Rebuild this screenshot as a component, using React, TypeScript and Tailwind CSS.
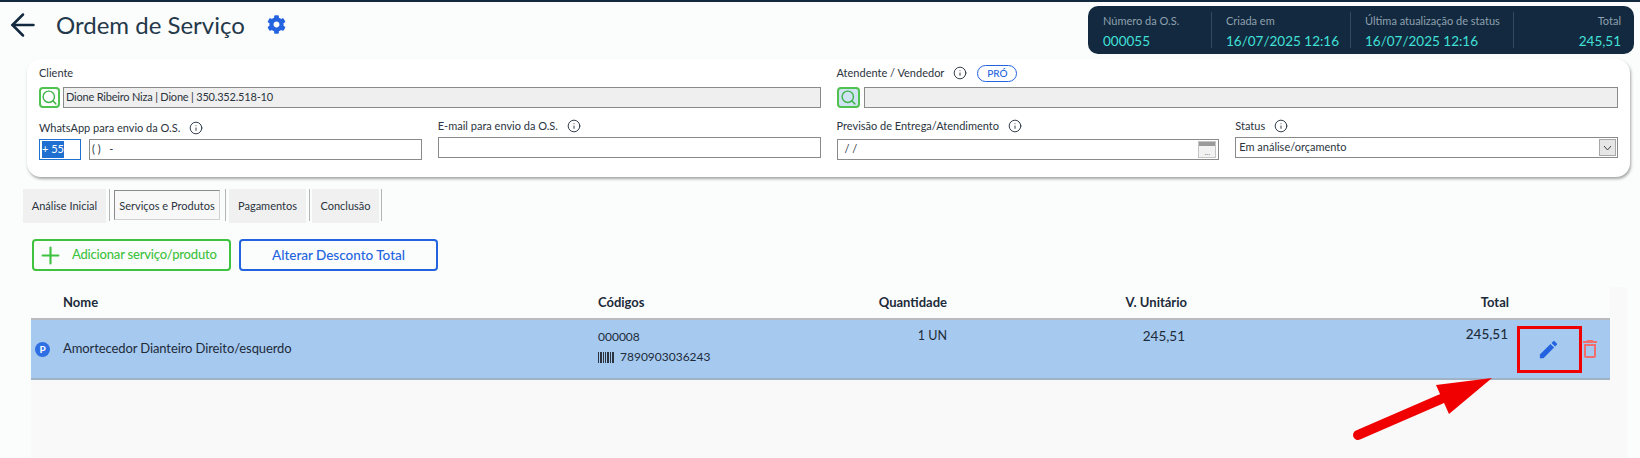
import { ArrowLeft, Info, Plus, Search } from "lucide-react";
import { FaCog } from "react-icons/fa";
import { MdEdit, MdOutlineDelete } from "react-icons/md";

const tableCols = "grid grid-cols-[32px_535px_200px_149px_240px_322px_101px]";

function Stat({
  label,
  value,
  className,
  right,
}: {
  label: string;
  value: string;
  className: string;
  right?: boolean;
}) {
  return (
    <div className={`flex flex-col justify-between py-[5px] ${right ? "items-end" : ""} ${className}`}>
      <span className="text-[11px] leading-[20px] text-[#8fa0ae]">{label}</span>
      <span className="text-[13.5px] leading-[20px] text-[#41e0d8]">{value}</span>
    </div>
  );
}

function FieldLabel({ text, info, className = "" }: { text: string; info?: boolean; className?: string }) {
  return (
    <div className={`flex h-[20px] items-center text-[11px] text-[#2b3440] ${className}`}>
      {text}
      {info ? <Info className="ml-[9px] h-[14px] w-[14px] text-[#26323f]" strokeWidth={1.6} /> : null}
    </div>
  );
}

function SearchButton({ active }: { active?: boolean }) {
  return (
    <span
      className={`grid h-[21px] shrink-0 place-items-center rounded-[4px] border-2 border-[#4fc24f] ${
        active ? "w-[23px] bg-[#cfe3f2]" : "w-[21px] bg-white"
      }`}
    >
      <Search className="h-[17px] w-[17px] text-[#3fb24a]" strokeWidth={2} />
    </span>
  );
}

function Tab({ text, active, className }: { text: string; active?: boolean; className: string }) {
  return (
    <div className="flex items-start">
      <div
        className={
          active
            ? `mt-[1px] flex h-[30px] items-center justify-center whitespace-nowrap border border-[#8a8a8a] border-b-[#d0d0d0] border-r-[#d0d0d0] bg-[#f8f8f8] pt-[2px] text-[11px] text-[#2b3440] ${className}`
            : `flex h-[34px] items-center justify-center whitespace-nowrap bg-[#f0f0f0] text-[11px] text-[#2b3440] ${className}`
        }
      >
        {text}
      </div>
    </div>
  );
}

function TabDivider({ className }: { className: string }) {
  return <div className={`h-[32px] w-px bg-[#b4b4b4] ${className}`} />;
}

export default function App() {
  return (
    <div className="relative h-[458px] w-[1640px] overflow-hidden bg-[#fbfdfc] font-['Lato',sans-serif]">
      <div className="h-[2px] bg-[#12293f]" />

      <header className="flex h-[57px] items-start">
        <ArrowLeft className="ml-[5px] mt-[5px] h-[36px] w-[36px] shrink-0 text-[#12293f]" strokeWidth={1.7} />
        <h1 className="ml-[15px] mt-[5px] text-[24px] leading-[36px] text-[#24384a]">
          Ordem de Serviço
        </h1>
        <FaCog className="ml-[22px] mt-[13px] h-[19px] w-[19px] text-[#2463e0]" />
        <div className="ml-auto mr-[6px] mt-[4px] flex h-[48px] w-[546px] rounded-[10px] bg-[#12293f] pl-[15px] pr-[13px]">
          <Stat label="Número da O.S." value="000055" className="w-[108px]" />
          <div className="my-[6px] w-px bg-[#33495c]" />
          <Stat label="Criada em" value="16/07/2025 12:16" className="w-[138px] pl-[14px]" />
          <div className="my-[6px] w-px bg-[#33495c]" />
          <Stat label="Última atualização de status" value="16/07/2025 12:16" className="w-[162px] pl-[14px]" />
          <div className="my-[6px] w-px bg-[#33495c]" />
          <Stat label="Total" value="245,51" className="flex-1" right />
        </div>
      </header>

      <section className="ml-[27px] mr-[10px] h-[118px] rounded-[14px] bg-white px-[12px] pt-[4px] shadow-[1px_2px_3px_rgba(0,0,0,0.35)]">
        <div className="grid grid-cols-2 gap-x-[16px]">
          <div>
            <FieldLabel text="Cliente" />
            <div className="mt-[4px] flex items-center gap-[3px]">
              <SearchButton />
              <div className="flex h-[21px] flex-1 items-center border border-[#8a8a8a] bg-[#efefef] px-[2px] text-[11px] tracking-[-0.2px] text-[#2b3440]">
                Dione Ribeiro Niza | Dione | 350.352.518-10
              </div>
            </div>
          </div>
          <div>
            <div className="flex items-center">
              <FieldLabel text="Atendente / Vendedor" info />
              <span className="ml-[10px] flex h-[17px] w-[40px] items-center justify-center rounded-full border border-[#2463e0] text-[10px] font-medium text-[#2463e0]">
                PRÓ
              </span>
            </div>
            <div className="mt-[4px] flex items-center gap-[4px]">
              <SearchButton active />
              <div className="h-[21px] flex-1 border border-[#8a8a8a] bg-[#efefef]" />
            </div>
          </div>
        </div>

        <div className="mt-[10px] grid grid-cols-4 gap-x-[16px]">
          <div>
            <FieldLabel text="WhatsApp para envio da O.S." info />
            <div className="mt-px flex gap-[8px]">
              <div className="flex h-[21px] w-[42px] items-center border border-[#1f6fd0] px-[2px] text-[11px]">
                <span className="bg-[#1f6fd0] text-white">+ 55</span>
              </div>
              <div className="flex h-[21px] flex-1 items-center border border-[#8a8a8a] px-[2px] text-[11px] text-[#2b3440]">
                ( )&nbsp;&nbsp;&nbsp;-
              </div>
            </div>
          </div>
          <div>
            <FieldLabel text="E-mail para envio da O.S." info className="-mt-[2px]" />
            <div className="mt-px h-[21px] border border-[#8a8a8a]" />
          </div>
          <div>
            <FieldLabel text="Previsão de Entrega/Atendimento" info className="-mt-[2px]" />
            <div className="mt-[3px] flex h-[21px] items-center justify-between border border-[#8a8a8a] pl-[7px] text-[11px] text-[#2b3440]">
              / /
              <span className="mr-[2px] flex h-[17px] w-[18px] flex-col border border-[#c4c4c4] bg-[#f2f2f2]">
                <span className="h-[4px] bg-[#9a9a9a]" />
                <span className="mt-[3px] text-center text-[8px] leading-[6px] text-[#777]">...</span>
              </span>
            </div>
          </div>
          <div>
            <FieldLabel text="Status" info className="-mt-[2px]" />
            <div className="mt-px flex h-[21px] items-center justify-between border border-[#8a8a8a] pl-[3px] text-[11px] text-[#2b3440]">
              Em análise/orçamento
              <span className="mr-px grid h-[17px] w-[17px] place-items-center border border-[#a8a8a8] bg-[#e6e6e6]">
                <svg width="9" height="6" viewBox="0 0 9 6" fill="none" stroke="#444" strokeWidth="1">
                  <path d="M1 1l3.5 4L8 1" />
                </svg>
              </span>
            </div>
          </div>
        </div>
      </section>

      <nav className="ml-[23px] mt-[12px] flex h-[34px] items-start">
        <Tab text="Análise Inicial" className="w-[83px]" />
        <TabDivider className="ml-[3px]" />
        <div className="w-[4px]" />
        <Tab text="Serviços e Produtos" active className="w-[106px]" />
        <TabDivider className="ml-[5px]" />
        <div className="w-[3px]" />
        <Tab text="Pagamentos" className="w-[77px]" />
        <TabDivider className="ml-[3px]" />
        <div className="w-[2px]" />
        <Tab text="Conclusão" className="w-[67px]" />
        <TabDivider className="ml-[2px]" />
      </nav>

      <div className="ml-[32px] mt-[16px] flex gap-[8px]">
        <button className="flex h-[32px] w-[199px] items-center rounded-[4px] border-2 border-[#3fc23f] pl-[3px] text-[13px] font-medium tracking-[-0.2px] text-[#3fc23f]">
          <Plus className="h-[27px] w-[27px] shrink-0" strokeWidth={1.9} />
          <span className="ml-[8px] whitespace-nowrap">Adicionar serviço/produto</span>
        </button>
        <button className="h-[32px] w-[199px] rounded-[4px] border-2 border-[#2463e0] text-[13.5px] font-medium text-[#2463e0]">
          Alterar Desconto Total
        </button>
      </div>

      <div className="ml-[31px] mr-[13px] mt-[16px] h-[171px] bg-[#f9f9f9]">
        <div className="w-[1579px]">
          <div className={`${tableCols} h-[33px] items-center border-b-2 border-[#b8bcbf] bg-[#fbfdfc] text-[13px] font-bold text-[#1d2b3a]`}>
            <span />
            <span>Nome</span>
            <span>Códigos</span>
            <span className="text-right">Quantidade</span>
            <span className="text-right">V. Unitário</span>
            <span className="text-right">Total</span>
            <span />
          </div>
          <div className={`${tableCols} h-[60px] border-b-2 border-[#9fb2c6] bg-[#a6c9ef] text-[12.5px] text-[#1d2b3a]`}>
            <div className="flex items-center pl-[4px]">
              <span className="grid h-[15px] w-[15px] place-items-center rounded-full bg-[#2f6fe4] text-[10px] font-bold text-white">
                P
              </span>
            </div>
            <div className="flex items-center text-[13px] tracking-[-0.1px]">Amortecedor Dianteiro Direito/esquerdo</div>
            <div className="pt-[8px]">
              <div className="text-[12px] leading-[18px]">000008</div>
              <div className="mt-[3px] flex items-center text-[12px] leading-[16px]">
                <svg width="16" height="11" viewBox="0 0 16 11" fill="#2b3440">
                  <path d="M0 0h1v11H0zM2 0h2v11H2zM5 0h1v11H5zM7 0h1v11H7zM9 0h2v11H9zM12 0h1v11h-1zM14 0h2v11h-2z" />
                </svg>
                <span className="ml-[6px]">7890903036243</span>
              </div>
            </div>
            <div className="pt-[7px] text-right leading-[18px]">1 UN</div>
            <div className="pr-[2px] pt-[7px] text-right text-[13.5px] leading-[18px]">245,51</div>
            <div className="pr-px pt-[5px] text-right text-[13.5px] font-medium leading-[18px]">245,51</div>
            <div className="flex items-start pl-[7px] pt-[6px]">
              <span className="grid h-[46px] w-[64px] shrink-0 place-items-center">
                <MdEdit className="h-[23px] w-[23px] text-[#2463e0]" />
              </span>
              <MdOutlineDelete className="-ml-[2px] mt-[11px] h-[24px] w-[24px] shrink-0 text-[#f26d6d]" />
            </div>
          </div>
        </div>
      </div>

      {/* annotation drawn over the row */}
      <div className="absolute left-[1517px] top-[326px] h-[47px] w-[65px] border-[3px] border-[#f00000]" />
      <svg className="absolute left-0 top-0" width="1640" height="458" viewBox="0 0 1640 458" fill="none">
        <path d="M1358 435L1441 399" stroke="#f00000" strokeWidth="10" strokeLinecap="round" />
        <path d="M1492 378L1436 385L1449 414Z" fill="#f00000" />
      </svg>
    </div>
  );
}
